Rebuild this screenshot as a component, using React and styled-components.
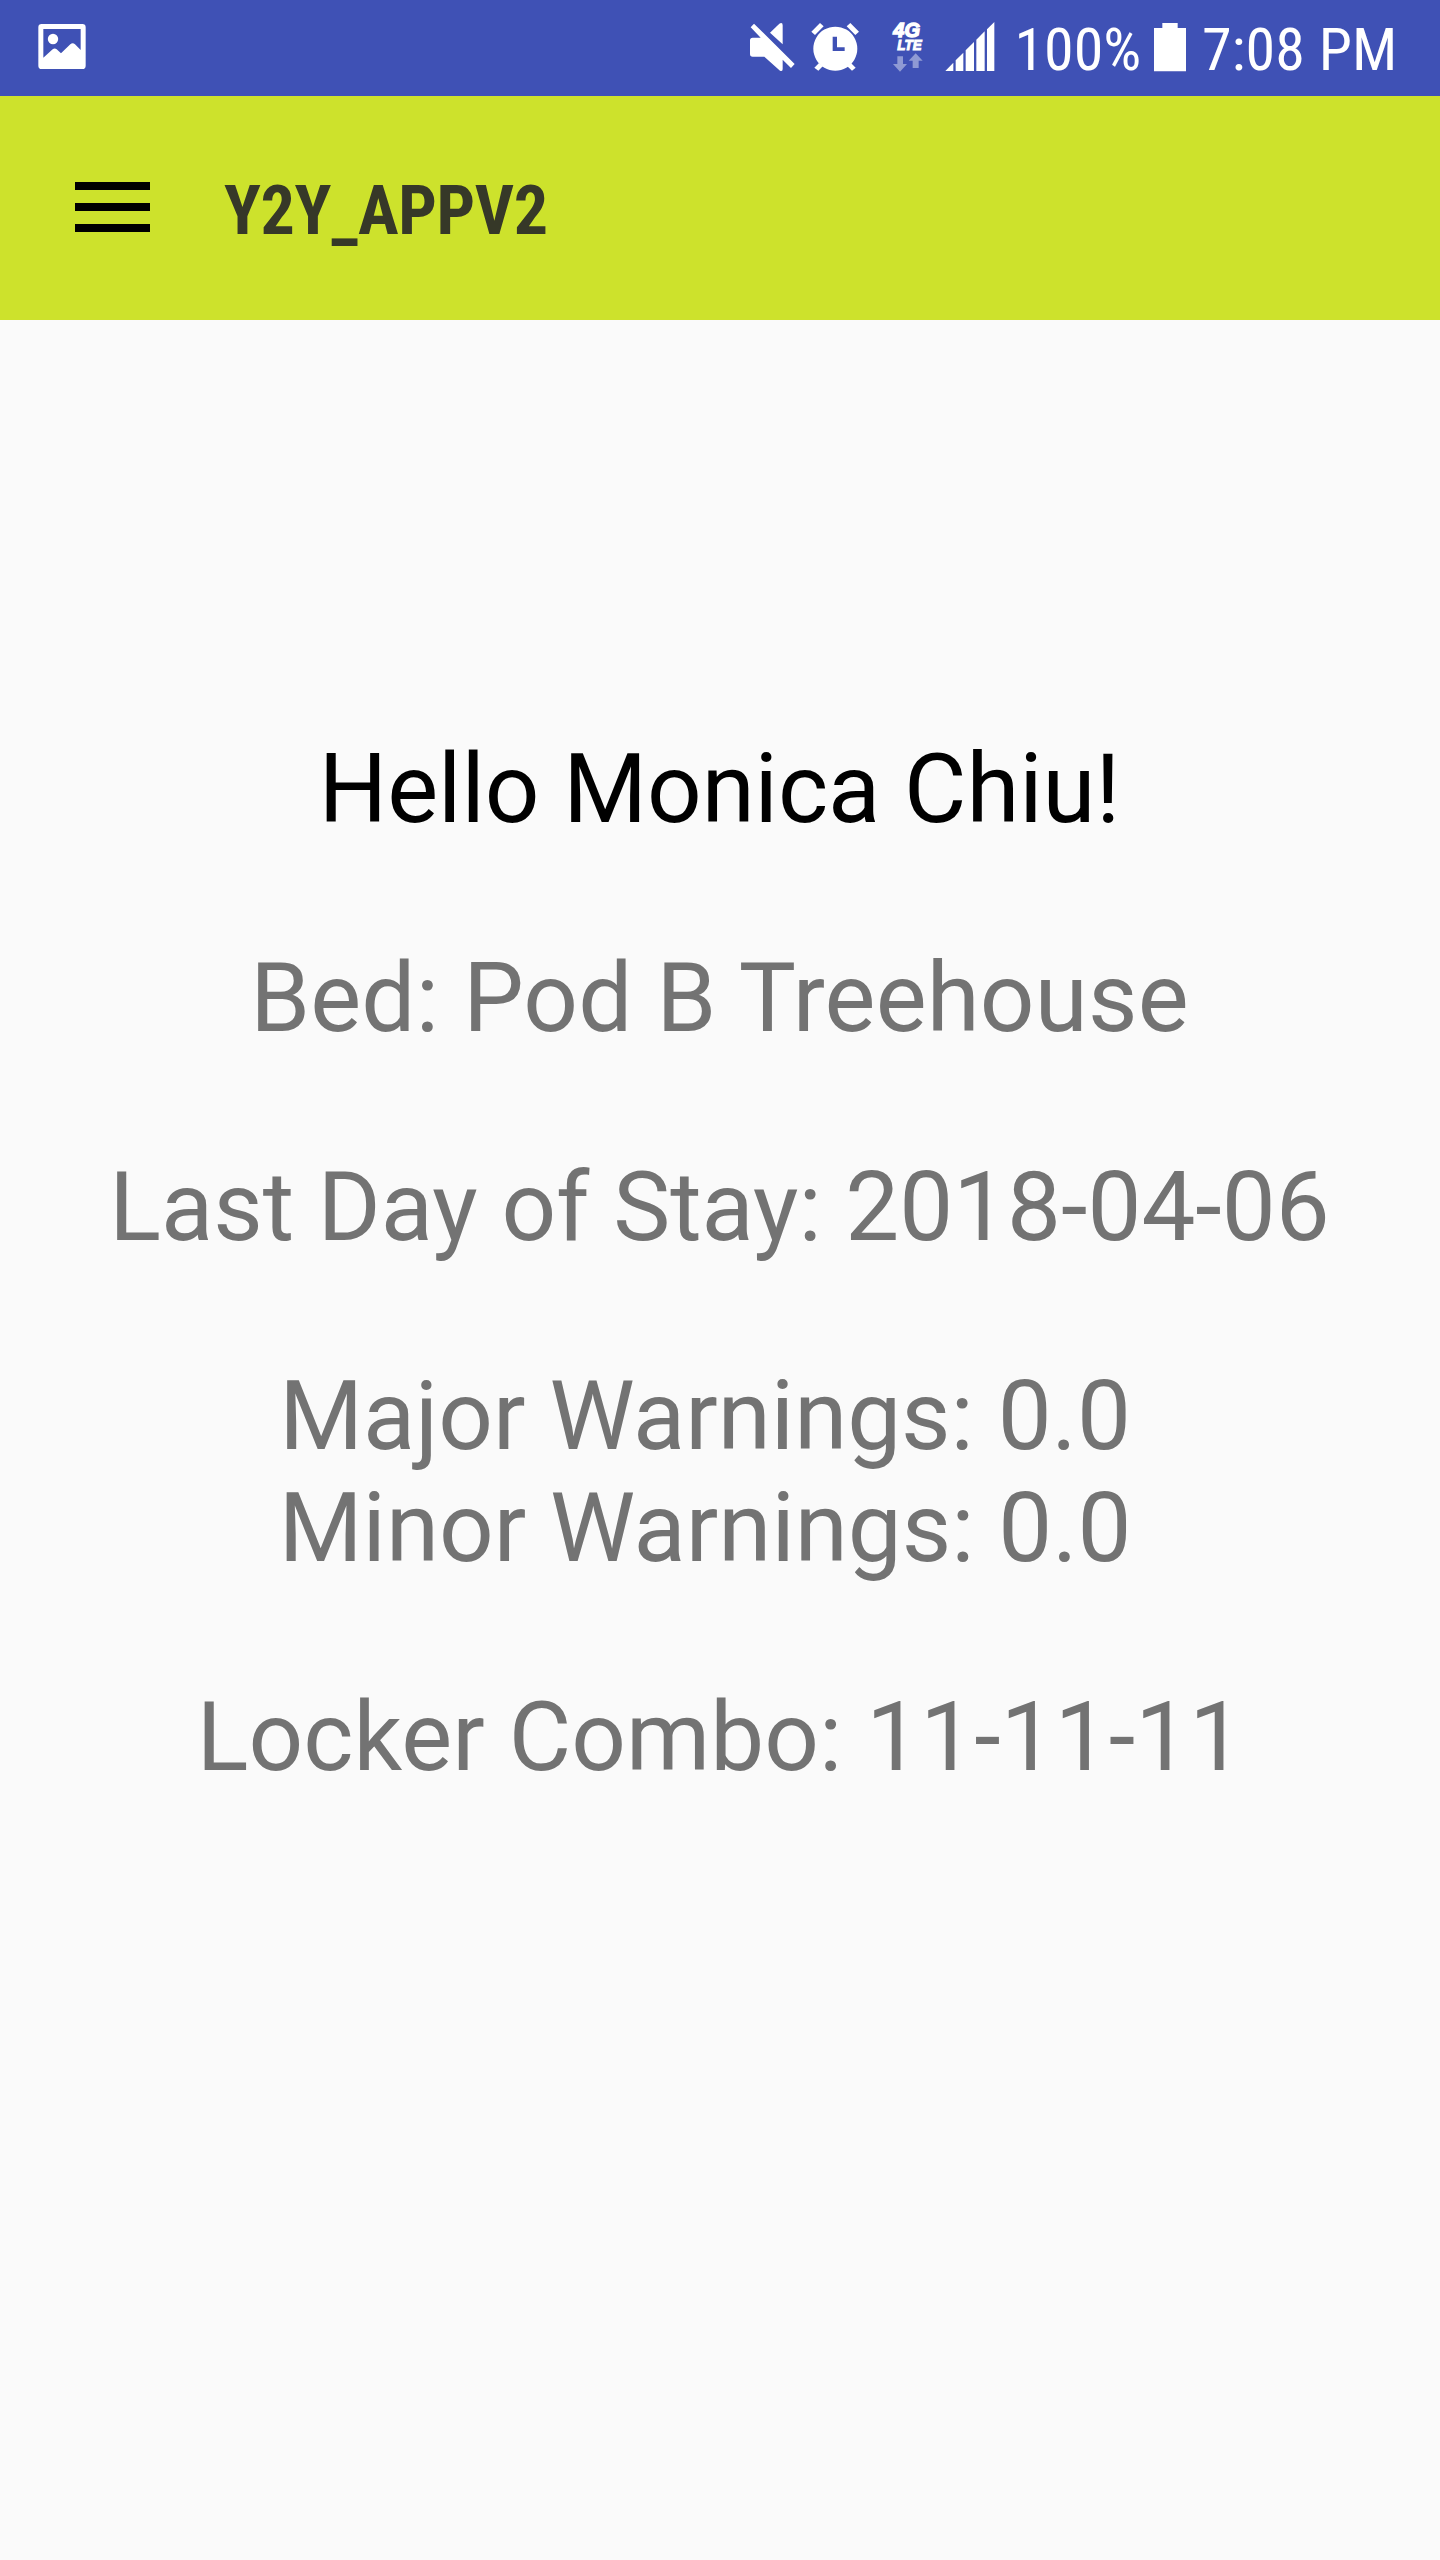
import React from "react";
import styled, { createGlobalStyle } from "styled-components";

const GlobalStyle = createGlobalStyle`
  body { margin: 0; background: #fafafa; font-family: Roboto, "Liberation Sans", sans-serif; }
`;

const Screen = styled.div`
  width: 1440px;
  height: 2560px;
  display: flex;
  flex-direction: column;
  background: #fafafa;
  overflow: hidden;
`;

const StatusBar = styled.header`
  height: 96px;
  flex: none;
  display: flex;
  align-items: flex-start;
  background: #3f51b5;
  color: #fff;
`;

const Icon = styled.svg`
  display: block;
  flex: none;
  width: ${(p) => p.$w}px;
  height: 96px;
  margin-left: ${(p) => p.$gap || 0}px;
  fill: #fff;
  overflow: visible;
`;

const NetworkLabel = styled.text`
  font-family: "Liberation Sans", sans-serif;
  font-weight: 700;
  font-style: italic;
  font-size: ${(p) => p.$size}px;
  stroke: #fff;
  stroke-width: ${(p) => p.$stroke}px;
`;

const StatusText = styled.span`
  flex: none;
  width: ${(p) => p.$w}px;
  margin-left: ${(p) => p.$gap}px;
  font-size: 60px;
  line-height: 100px;
  white-space: nowrap;
  font-family: "Roboto Condensed", Roboto, sans-serif;
  font-stretch: 75%;
`;

const AppBar = styled.nav`
  height: 224px;
  flex: none;
  display: flex;
  align-items: flex-start;
  background: #cde22c;
`;

const MenuButton = styled.button`
  display: flex;
  flex-direction: column;
  gap: 13px;
  width: 75px;
  margin: 86px 0 0 74.5px;
  padding: 0;
  border: 0;
  background: none;
`;

const MenuLine = styled.span`
  height: 8px;
  background: #000;
`;

const Title = styled.h1`
  margin: 75px 0 0 74.5px;
  font: 700 68px/80px "Roboto Condensed", Roboto, sans-serif;
  font-stretch: 75%;
  letter-spacing: -0.35px;
  white-space: nowrap;
  color: #363828;
`;

const Underscore = styled.span`
  line-height: 0;
  vertical-align: -4px;
`;

const Details = styled.main`
  display: flex;
  flex-direction: column;
  gap: 97px;
  padding-top: 413px;
  text-align: center;
`;

const Line = styled.p`
  margin: 0;
  padding-right: ${(p) => p.$inset || 0}px;
  font-size: 96px;
  line-height: 112px;
  letter-spacing: ${(p) => p.$tracking || 0}px;
  white-space: pre;
  color: ${(p) => (p.$strong ? "#000" : "#737373")};
`;

export default function App() {
  return (
    <Screen>
      <GlobalStyle />
      <StatusBar>
        <Icon $w={48} $gap={38} viewBox="114 0 144 288">
          <path fillRule="evenodd" d="M125 72H247Q257 72 257 82V197Q257 207 247 207H125Q115 207 115 197V82Q115 72 125 72ZM130 87V173L158 148Q164 143 170 148L183 160L211 133Q218 127 225 133L242 150V87Z" />
          <circle cx="159" cy="117" r="15.5" />
        </Icon>
        <Icon $w={46} $gap={663} viewBox="57 0 138 288">
          <path d="M62 82L72 71L194 192L183 204L158 179V207Q158 216 150 212L103 170H68Q60 170 60 162V121Q60 113 68 113H92ZM120 98L148 71Q158 66 158 76V133Z" />
        </Icon>
        <Icon $w={48} $gap={16} viewBox="244 0 144 288">
          <path fillRule="evenodd" d="M317 80A66 66 0 1 1 316.900 80ZM309 110V153H345V142H322V110Z" />
          <path d="M245 95L271 69L282 79L256 105ZM362 69L388 95L377 105L351 79ZM254 203L268 189L280 198L266 212ZM378 203L364 189L352 198L367 212Z" />
        </Icon>
        <Icon $w={30} $gap={34} viewBox="488 0 90 288">
          <NetworkLabel x="489" y="112" $size={58} $stroke={4} textLength="80" lengthAdjust="spacingAndGlyphs">4G</NetworkLabel>
          <NetworkLabel x="501" y="149" $size={44} $stroke={3} textLength="73" lengthAdjust="spacingAndGlyphs">LTE</NetworkLabel>
          <path opacity=".42" d="M501 169H518V192H530L509 215L488 192H501ZM556 160L577 182H565V204H547V182H535Z" />
        </Icon>
        <Icon $w={50} $gap={22} viewBox="644 0 150 288">
          <path d="M645 213L669 188V213ZM676 181L699 158V213H676ZM706 151L731 126V213H706ZM738 119L763 94V213H738ZM770 88L792 66V213H770Z" />
        </Icon>
        <StatusText $w={129} $gap={19.5}>100%</StatusText>
        <Icon $w={32} $gap={10.5} viewBox="462 0 96 288">
          <path d="M487 69H533V84H558V214H462V84H487Z" />
        </Icon>
        <StatusText $w={200} $gap={16}>7:08 PM</StatusText>
      </StatusBar>
      <AppBar>
        <MenuButton aria-label="Menu">
          <MenuLine /><MenuLine /><MenuLine />
        </MenuButton>
        <Title>Y2Y<Underscore>_</Underscore>APPV2</Title>
      </AppBar>
      <Details>
        <Line $strong $tracking={-0.05} $inset={1}>Hello Monica Chiu!</Line>
        <Line $tracking={0.2} $inset={1}>Bed: Pod B Treehouse</Line>
        <Line $tracking={-0.04} $inset={1}>Last Day of Stay: 2018-04-06</Line>
        <Line $inset={6}>{"Major Warnings: 0.0 \nMinor Warnings: 0.0 "}</Line>
        <Line $tracking={0.05}>Locker Combo: 11-11-11</Line>
      </Details>
    </Screen>
  );
}
